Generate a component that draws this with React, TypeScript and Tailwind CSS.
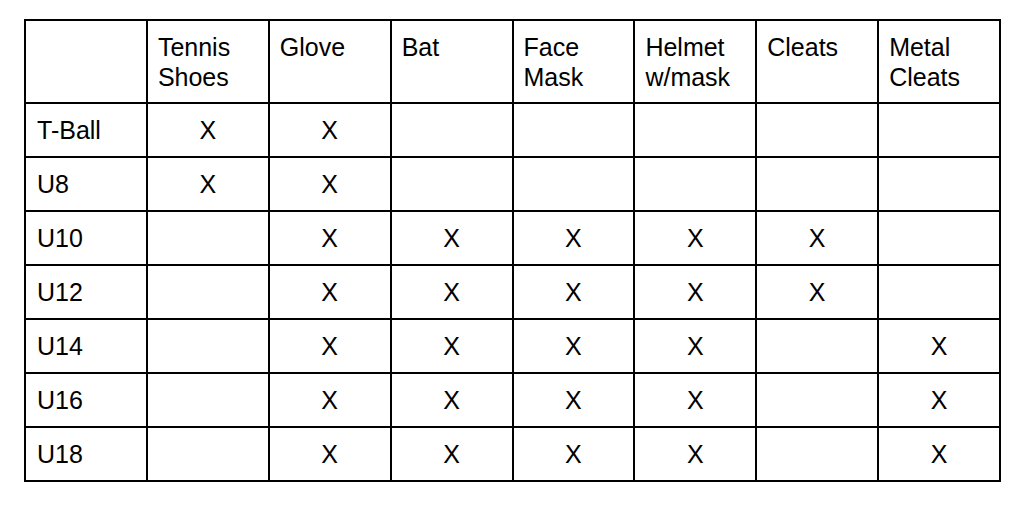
import React from "react"

const headers = ["", "Tennis Shoes", "Glove", "Bat", "Face Mask", "Helmet w/mask", "Cleats", "Metal Cleats"]

const rows: { label: string; marks: boolean[] }[] = [
  { label: "T-Ball", marks: [true, true, false, false, false, false, false] },
  { label: "U8", marks: [true, true, false, false, false, false, false] },
  { label: "U10", marks: [false, true, true, true, true, true, false] },
  { label: "U12", marks: [false, true, true, true, true, true, false] },
  { label: "U14", marks: [false, true, true, true, true, false, true] },
  { label: "U16", marks: [false, true, true, true, true, false, true] },
  { label: "U18", marks: [false, true, true, true, true, false, true] },
]

export default function App() {
  return (
    <div className="w-[1024px] h-[506px] bg-white pl-[24px] pt-[19px] font-['Liberation_Sans',Arial,sans-serif] text-[25px] leading-[30px] text-black">
      <table className="w-[977px] table-fixed border-collapse">
        <thead>
          <tr className="h-[83px]">
            {headers.map((h, i) => (
              <th
                key={i}
                className="border-2 border-black align-top text-left font-normal px-[10px] pt-[11px] pb-0"
              >
                {h}
              </th>
            ))}
          </tr>
        </thead>
        <tbody>
          {rows.map((r) => (
            <tr key={r.label} className="h-[54px]">
              <td className="border-2 border-black px-[11px] align-middle">{r.label}</td>
              {r.marks.map((m, i) => (
                <td key={i} className="border-2 border-black text-center align-middle">
                  {m ? "X" : ""}
                </td>
              ))}
            </tr>
          ))}
        </tbody>
      </table>
    </div>
  )
}
